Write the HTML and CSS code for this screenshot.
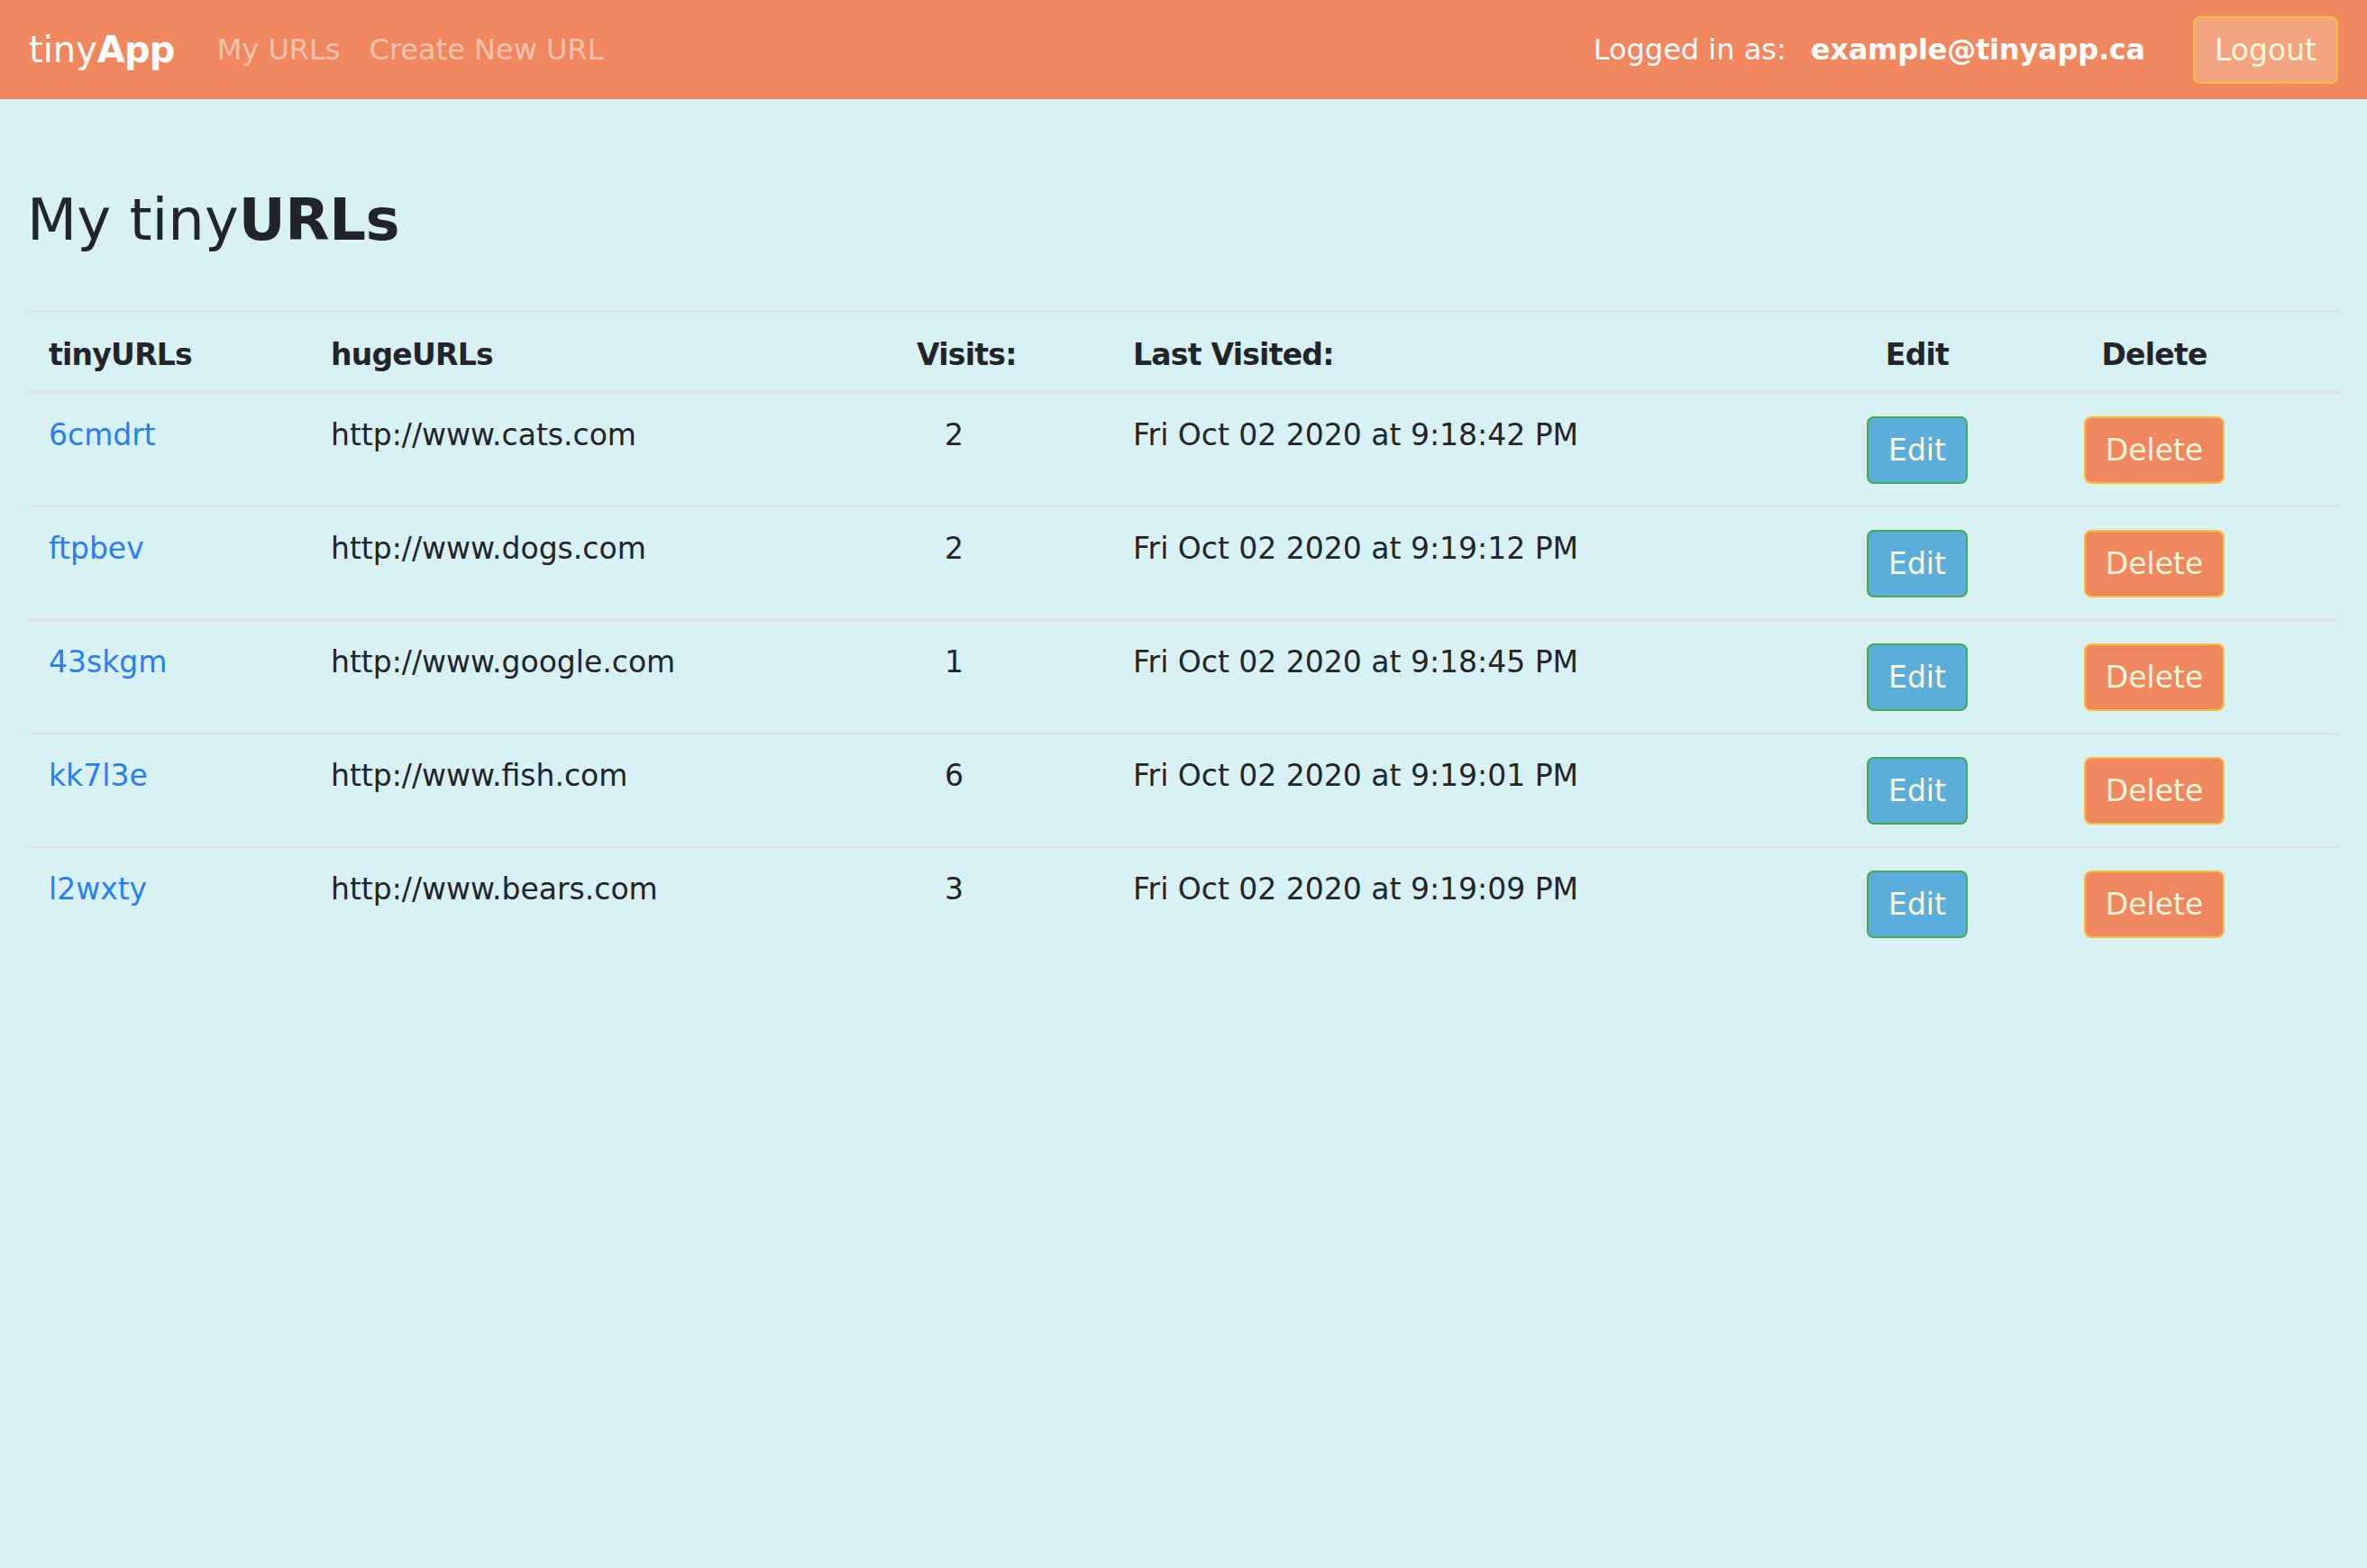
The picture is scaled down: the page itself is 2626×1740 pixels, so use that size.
FILE: index.html
```html
<!DOCTYPE html>
<html lang="en">
<head>
<meta charset="utf-8">
<title>tinyApp - My URLs</title>
<link rel="stylesheet" href="styles.css">
</head>
<body>
<nav class="navbar">
  <a class="brand" href="#">tiny<b>App</b></a>
  <ul class="nav">
    <li><a class="nav-link" href="#">My URLs</a></li>
    <li><a class="nav-link" href="#">Create New URL</a></li>
  </ul>
  <div class="user">
    <span class="logged">Logged in as:</span>
    <span class="email">example@tinyapp.ca</span>
    <button class="btn btn-logout" type="button">Logout</button>
  </div>
</nav>
<main class="main">
  <h2 class="title">My tiny<b>URLs</b></h2>
  <table class="urls">
    <colgroup>
      <col class="c-tiny">
      <col class="c-huge">
      <col class="c-visits">
      <col class="c-last">
      <col class="c-edit">
      <col class="c-delete">
    </colgroup>
    <thead>
      <tr>
        <th>tinyURLs</th>
        <th>hugeURLs</th>
        <th>Visits:</th>
        <th>Last Visited:</th>
        <th class="center">Edit</th>
        <th class="center del">Delete</th>
      </tr>
    </thead>
    <tbody>
      <tr>
        <td><a class="short" href="#">6cmdrt</a></td>
        <td>http://www.cats.com</td>
        <td class="num">2</td>
        <td>Fri Oct 02 2020 at 9:18:42 PM</td>
        <td class="center"><button class="btn btn-edit" type="button">Edit</button></td>
        <td class="center del"><button class="btn btn-delete" type="button">Delete</button></td>
      </tr>
      <tr>
        <td><a class="short" href="#">ftpbev</a></td>
        <td>http://www.dogs.com</td>
        <td class="num">2</td>
        <td>Fri Oct 02 2020 at 9:19:12 PM</td>
        <td class="center"><button class="btn btn-edit" type="button">Edit</button></td>
        <td class="center del"><button class="btn btn-delete" type="button">Delete</button></td>
      </tr>
      <tr>
        <td><a class="short" href="#">43skgm</a></td>
        <td>http://www.google.com</td>
        <td class="num">1</td>
        <td>Fri Oct 02 2020 at 9:18:45 PM</td>
        <td class="center"><button class="btn btn-edit" type="button">Edit</button></td>
        <td class="center del"><button class="btn btn-delete" type="button">Delete</button></td>
      </tr>
      <tr>
        <td><a class="short" href="#">kk7l3e</a></td>
        <td>http://www.fish.com</td>
        <td class="num">6</td>
        <td>Fri Oct 02 2020 at 9:19:01 PM</td>
        <td class="center"><button class="btn btn-edit" type="button">Edit</button></td>
        <td class="center del"><button class="btn btn-delete" type="button">Delete</button></td>
      </tr>
      <tr>
        <td><a class="short" href="#">l2wxty</a></td>
        <td>http://www.bears.com</td>
        <td class="num">3</td>
        <td>Fri Oct 02 2020 at 9:19:09 PM</td>
        <td class="center"><button class="btn btn-edit" type="button">Edit</button></td>
        <td class="center del"><button class="btn btn-delete" type="button">Delete</button></td>
      </tr>
    </tbody>
  </table>
</main>
</body>
</html>
```
FILE: styles.css
```css
* { box-sizing: border-box; }

html, body {
  margin: 0;
  padding: 0;
}

body {
  background: #d8f1f5;
  color: #212529;
  font-family: "DejaVu Sans", Verdana, sans-serif;
  font-size: 33px;
  min-height: 100vh;
}

/* ---------- navbar ---------- */
.navbar {
  display: flex;
  align-items: center;
  height: 110px;
  padding: 0 32px;
  background: #f0875e;
}

.brand {
  color: #ffffff;
  text-decoration: none;
  font-size: 40px;
  line-height: 1;
  margin-right: 31px;
}

.brand b {
  font-weight: bold;
  letter-spacing: -0.8px;
}

.nav {
  display: flex;
  list-style: none;
  margin: 0;
  padding: 0;
}

.nav-link {
  display: block;
  padding: 0 16px;
  font-size: 32px;
  color: rgba(255, 255, 255, 0.5);
  text-decoration: none;
}

.user {
  margin-left: auto;
  display: flex;
  align-items: center;
  font-size: 32px;
  color: #ffffff;
}

.email {
  font-weight: bold;
  margin-left: 27px;
  letter-spacing: -0.2px;
}

.btn {
  font-family: "DejaVu Sans", Verdana, sans-serif;
  font-size: 33px;
  color: #fff8dc;
  height: 75px;
  line-height: 71px;
  padding: 0 22px;
  border-radius: 8px;
  border: 2px solid transparent;
  cursor: pointer;
  display: inline-block;
  vertical-align: top;
}

.btn-logout {
  margin-left: 53px;
  background: #f2a380;
  border-color: #f7bf3e;
}

/* ---------- main ---------- */
.main {
  padding: 96px 30px 0;
}

.title {
  font-size: 64px;
  font-weight: normal;
  line-height: 1.2;
  margin: 0 0 62px;
}

.title b {
  font-weight: bold;
  letter-spacing: -0.4px;
}

.urls {
  width: 100%;
  border-collapse: collapse;
  table-layout: fixed;
}

.c-tiny { width: 313px; }
.c-huge { width: 650px; }
.c-visits { width: 240px; }
.c-last { width: 767px; }
.c-edit { width: 254px; }
.c-delete { width: 342px; }

.urls th {
  text-align: left;
  font-weight: bold;
  letter-spacing: -0.75px;
  line-height: 42px;
  padding: 26px 24px 18px;
  border-top: 2px solid #dee2e6;
  border-bottom: 4px solid #dee2e6;
}

.urls td {
  line-height: 42px;
  padding: 25px 24px 24px;
  vertical-align: top;
  border-top: 2px solid #dee2e6;
}

.urls thead + tbody tr:first-child td { border-top: none; }

.urls .center { text-align: center; }
.urls .del { padding-right: 94px; }
.urls td.num { padding-left: 55px; }

.short {
  color: #2a7ef5;
  text-decoration: none;
}

.btn-edit {
  background: #5aaed9;
  border-color: #4ba74f;
}

.btn-delete {
  background: #f0875e;
  border-color: #f8c03a;
}
```
